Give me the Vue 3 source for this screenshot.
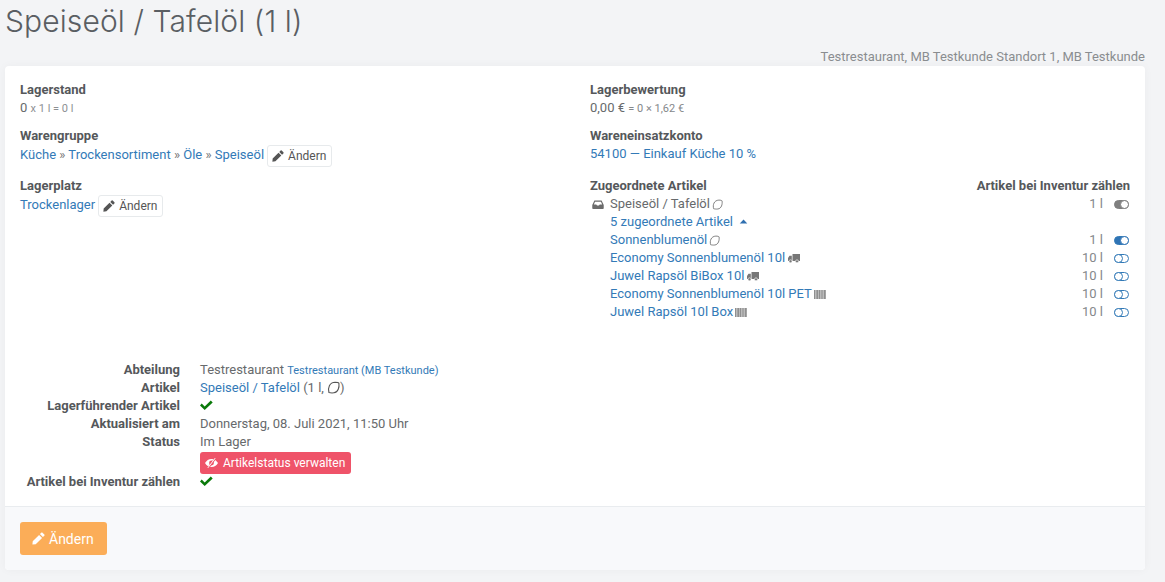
<script setup>
const items = [
  { name: 'Sonnenblumenöl', icon: 'leaf', qty: '1 l', on: true },
  { name: 'Economy Sonnenblumenöl 10l', icon: 'truck', qty: '10 l' },
  { name: 'Juwel Rapsöl BiBox 10l', icon: 'truck', qty: '10 l' },
  { name: 'Economy Sonnenblumenöl 10l PET', icon: 'bars', qty: '10 l' },
  { name: 'Juwel Rapsöl 10l Box', icon: 'bars', qty: '10 l' },
]
const pencil = 'M11.500 .8a1 1 0 0 1 1.400 0l2.300 2.300a1 1 0 0 1 0 1.400L13.400 6.300 9.700 2.600zM8.700 3.600l3.700 3.700-7.800 7.800-4.100.4.400-4.100z'
const leafPath = 'M1.800 10.600C.6 6.500 2.200 1.400 7.500 1.200c2 0 3.300.4 3.500.9.500 3.500-.6 8.300-4.600 8.800-1.800.2-3.700 0-4.600-.3z'
const checkPath = 'M1.700 3.600 4.700 6.500 10.800.6 12.700 2.500 4.700 10 0 5.500z'
</script>

<template>
  <div class="page">
    <h1 class="title">Speiseöl / Tafelöl (1 l)</h1>
    <div class="owner">Testrestaurant, MB Testkunde Standort 1, MB Testkunde</div>
    <section class="card">
      <div class="body">
        <div class="cols">
          <div class="col">
            <div class="block">
              <div class="label">Lagerstand</div>
              <div class="line">0 <small class="muted">x 1 l = 0 l</small></div>
            </div>
            <div class="block b2">
              <div class="label">Warengruppe</div>
              <div class="line btnline"><a>Küche</a> <span class="sep">»</span> <a>Trockensortiment</a> <span class="sep">»</span> <a>Öle</a> <span class="sep">»</span> <a>Speiseöl</a>
                <button class="mini"><svg class="ic" viewBox="0 0 16 16"><path fill="#555" :d="pencil"/></svg>Ändern</button>
              </div>
            </div>
            <div class="block b3">
              <div class="label">Lagerplatz</div>
              <div class="line btnline"><a>Trockenlager</a>
                <button class="mini"><svg class="ic" viewBox="0 0 16 16"><path fill="#555" :d="pencil"/></svg>Ändern</button>
              </div>
            </div>
          </div>
          <div class="col">
            <div class="block">
              <div class="label">Lagerbewertung</div>
              <div class="line">0,00 € <small class="muted2">= 0 × 1,62 €</small></div>
            </div>
            <div class="block b2">
              <div class="label">Wareneinsatzkonto</div>
              <div class="line"><a>54100 — Einkauf Küche 10 %</a></div>
            </div>
            <div class="assigned">
              <div class="row head">
                <span class="label">Zugeordnete Artikel</span>
                <span class="label">Artikel bei Inventur zählen</span>
              </div>
              <div class="row">
                <span class="name">
                  <svg class="tray" viewBox="0 0 14 11"><path fill="#6b6b6b" d="M2.600.5h8.800L14 6v4a1 1 0 0 1-1 1H1a1 1 0 0 1-1-1V6zM3.400 2 1.900 5.400h3l.9 1.400h2.400l.9-1.400h3L10.600 2z"/></svg>
                  <span class="plain">Speiseöl / Tafelöl</span>
                  <svg class="leaf" viewBox="0 0 12 12"><path fill="none" stroke="#777" :d="leafPath"/></svg>
                </span>
                <span class="right"><span class="qty">1 l</span><span class="toggle grey"></span></span>
              </div>
              <div class="row sub"><a>5 zugeordnete Artikel <svg class="caret" viewBox="0 0 10 6"><path fill="#2f6fb0" d="M5 .5 9.500 5.500H.5z"/></svg></a></div>
              <div v-for="it in items" :key="it.name" class="row sub">
                <span class="name">
                  <a>{{ it.name }}</a>
                  <svg v-if="it.icon === 'leaf'" class="leaf" viewBox="0 0 12 12"><path fill="none" stroke="#777" :d="leafPath"/></svg>
                  <svg v-else-if="it.icon === 'truck'" class="truck" viewBox="0 0 12 9"><path fill="#777" d="M4.500 0H12v7H4.500zM0 4 1.500 1.800H3.800V7H0z"/><circle cx="2.500" cy="7.300" r="1.500" fill="#777" stroke="#fff" stroke-width=".6"/><circle cx="9" cy="7.300" r="1.500" fill="#777" stroke="#fff" stroke-width=".6"/></svg>
                  <svg v-else class="bars" viewBox="0 0 12 9"><path fill="#bbb" d="M0 0h12v9H0z"/><path fill="#8f8f8f" d="M0 0h1v9H0zM2.500 0h1.500v9H2.500zM5 0h1v9H5zM7.500 0h1v9h-1zM10 0h1.500v9H10z"/></svg>
                </span>
                <span class="right"><span class="qty">{{ it.qty }}</span><span class="toggle" :class="it.on ? 'blue' : 'off'"></span></span>
              </div>
            </div>
          </div>
        </div>
        <dl class="details">
          <dt>Abteilung</dt>
          <dd>Testrestaurant <a class="tiny">Testrestaurant (MB Testkunde)</a></dd>
          <dt>Artikel</dt>
          <dd><a>Speiseöl / Tafelöl</a> (1 l, <svg class="leaf big" viewBox="0 0 12 12"><path fill="none" stroke="#555" :d="leafPath"/></svg>)</dd>
          <dt>Lagerführender Artikel</dt>
          <dd><svg class="check" viewBox="0 0 13 10"><path fill="#0a7a0a" :d="checkPath"/></svg></dd>
          <dt>Aktualisiert am</dt>
          <dd>Donnerstag, 08. Juli 2021, 11:50 Uhr</dd>
          <dt>Status</dt>
          <dd class="status">Im Lager
            <button class="danger">
              <svg class="eye" viewBox="0 0 16 12"><path fill="#fff" d="M8 1c3.400 0 6.200 2 8 5-1.800 3-4.600 5-8 5S1.800 9 0 6c1.800-3 4.600-5 8-5zm0 2A3 3 0 1 0 8 9 3 3 0 0 0 8 3z"/><path stroke="#ef5369" stroke-width="2.200" d="M13 0 4 12"/><path stroke="#fff" stroke-width="1.200" d="M12.500 0 3.500 12"/></svg>Artikelstatus verwalten
            </button>
          </dd>
          <dt>Artikel bei Inventur zählen</dt>
          <dd><svg class="check" viewBox="0 0 13 10"><path fill="#0a7a0a" :d="checkPath"/></svg></dd>
        </dl>
      </div>
      <footer class="foot">
        <button class="warn"><svg class="pen" viewBox="0 0 16 16"><path fill="#fff" :d="pencil"/></svg>Ändern</button>
      </footer>
    </section>
  </div>
</template>

<style>
html, body { margin: 0; background: #f3f4f6; }
</style>

<style scoped>
.page {
  height: 582px;
  box-sizing: border-box;
  padding: 0 20px 0 5px;
  overflow: hidden;
  background: #f3f4f6;
  font-family: Roboto, "Liberation Sans", sans-serif;
  font-size: 13px;
  line-height: 18px;
  color: #676a6c;
}
.title {
  margin: 0;
  padding-top: 3px;
  height: 41px;
  font-family: Inter, Lato, sans-serif;
  font-weight: 300;
  font-size: 30px;
  letter-spacing: .1px;
  line-height: 36px;
  color: #5a5e63;
}
.owner { height: 22px; line-height: 18px; padding-top: 4px; box-sizing: border-box; text-align: right; color: #8a8d90; }
.card {
  background: #fff;
  border-radius: 4px;
  box-shadow: 0 0 10px rgba(0, 0, 0, .04);
  height: 504px;
  display: flex;
  flex-direction: column;
}
.body { flex: 1; padding: 15px 15px 0; }
.cols { display: grid; grid-template-columns: 570px 540px; height: 280px; }
.label { font-weight: 700; color: #55585b; }
.line { height: 18px; }
.b2 { margin-top: 10px; }
.b3 { margin-top: 12px; }
.btnline { height: 20px; line-height: 20px; }
.muted { font-size: 11px; color: #8d9093; }
.muted2 { font-size: 11px; color: #85888b; }
a { color: #337ab7; text-decoration: none; }
.sep { color: #777; }
.mini {
  display: inline-flex;
  align-items: center;
  height: 22px;
  margin: 0 0 0 3px;
  padding: 0 5px 0 4px;
  box-sizing: border-box;
  vertical-align: middle;
  background: #fff;
  border: 1px solid #e7eaec;
  border-radius: 3px;
  font: 12px Roboto, sans-serif;
  color: #555;
}
.ic { width: 12px; height: 12px; margin-right: 4px; }
.assigned { margin-top: 14px; }
.row { display: flex; justify-content: space-between; align-items: center; height: 18px; }
.sub { padding-left: 20px; }
.name { display: inline-flex; align-items: center; white-space: nowrap; }
.plain { color: #676a6c; }
.tray { width: 12px; height: 9px; margin: 0 6px 0 2px; }
.leaf { width: 11px; height: 11px; margin-left: 2px; }
.leaf.big { width: 13px; height: 13px; margin: 0; vertical-align: -2px; }
.truck { width: 12px; height: 9px; margin-left: 3px; }
.bars { width: 12px; height: 9px; margin-left: 2px; }
.caret { width: 9px; height: 5px; margin-left: 3px; vertical-align: 2px; }
.right { display: inline-flex; align-items: center; padding-right: 1px; }
.qty { color: #85888b; margin-right: 11px; }
.toggle {
  position: relative;
  width: 15px;
  height: 9px;
  box-sizing: border-box;
  border-radius: 5px;
  border: 1px solid #337ab7;
}
.toggle::after {
  content: "";
  position: absolute;
  top: -1px;
  width: 9px;
  height: 9px;
  box-sizing: border-box;
  border-radius: 50%;
  background: #fff;
  border: 1px solid #337ab7;
}
.toggle.off::after { left: -1px; }
.toggle.blue { background: #2f74b5; }
.toggle.blue::after { right: -1px; border-color: #2f74b5; }
.toggle.grey { background: #7f7f7f; border-color: #7f7f7f; }
.toggle.grey::after { right: -1px; border-color: #7f7f7f; }
.details {
  margin: 0;
  display: grid;
  grid-template-columns: 160px 1fr;
  column-gap: 20px;
}
dt { font-weight: 700; text-align: right; color: #55585b; height: 18px; }
dd { margin: 0; color: #676a6c; height: 18px; }
.tiny { font-size: 11px; }
.check { width: 13px; height: 10px; }
.status { display: flex; flex-direction: column; align-items: flex-start; height: 40px; }
.danger {
  display: inline-flex;
  align-items: center;
  flex: none;
  height: 22px;
  margin-top: 1px;
  padding: 0 6px 0 5px;
  background: #ef5369;
  border: 0;
  border-radius: 3px;
  color: #fff;
  font: 12px Roboto, sans-serif;
}
.eye { width: 13px; height: 10px; margin-right: 5px; }
.foot {
  height: 64px;
  flex: none;
  box-sizing: border-box;
  padding: 15px;
  background: #f8f9fb;
  border-top: 1px solid #e9ecef;
  border-radius: 0 0 4px 4px;
}
.warn {
  display: inline-flex;
  align-items: center;
  height: 33px;
  padding: 0 13px 0 12px;
  background: #fbad58;
  border: 0;
  border-radius: 3px;
  color: #fff;
  font: 14px Roboto, sans-serif;
}
.pen { width: 13px; height: 13px; margin-right: 4px; }
</style>
